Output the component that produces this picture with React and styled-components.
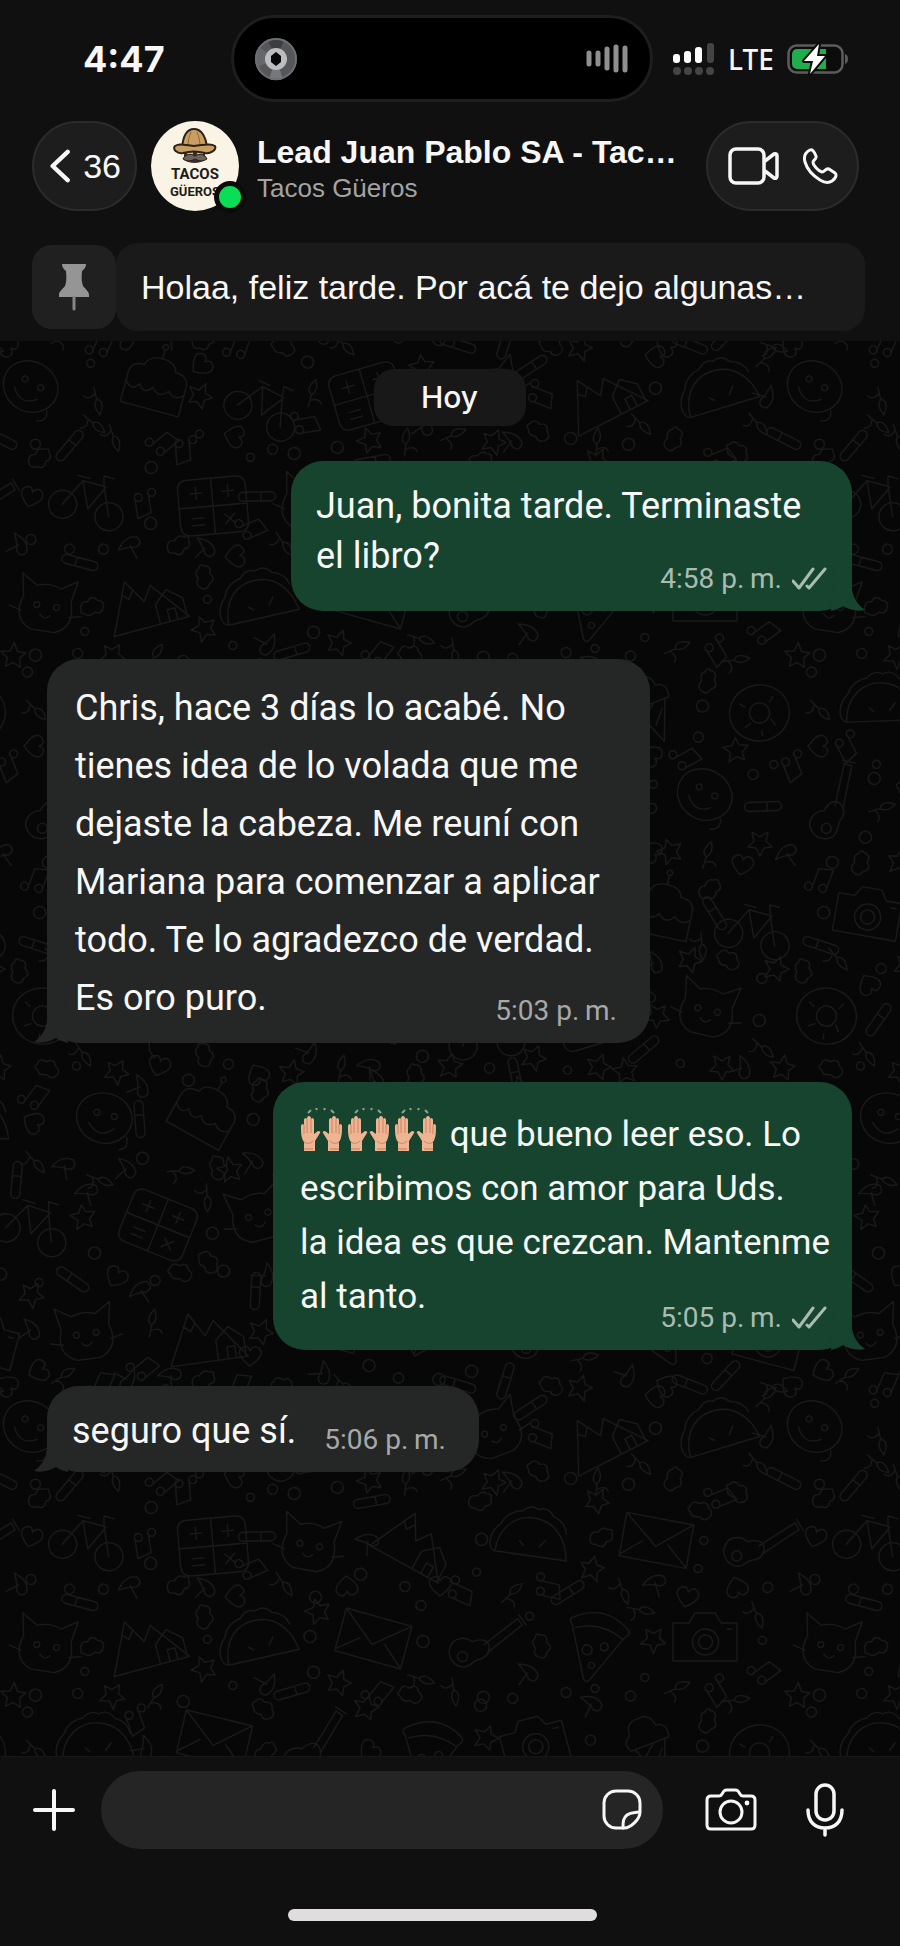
import React from 'react';
import styled, { createGlobalStyle, css } from 'styled-components';

const GlobalStyle = createGlobalStyle`
  *, *::before, *::after { box-sizing: border-box; }
  body {
    margin: 0;
    background: #060706;
    color: #f7f7f7;
    font-family: Roboto, "Liberation Sans", sans-serif;
  }
  button, input { font: inherit; color: inherit; }
`;

/* ---------- page ---------- */

const Screen = styled.div`
  display: flex;
  flex-direction: column;
  min-height: 100vh;
`;

const TopArea = styled.header`
  background: #101010;
  padding: 15px 0 10px;
`;

const StatusBar = styled.div`
  display: grid;
  grid-template-columns: 231fr 422fr 247fr;
  align-items: center;
`;

const Clock = styled.time`
  padding-left: 83px;
  font: 700 36px/44px Inter, sans-serif;
`;

const Island = styled.div`
  display: flex;
  align-items: center;
  justify-content: space-between;
  height: 87px;
  padding: 0 22px 0 20px;
  border: 3px solid #1e1e1e;
  border-radius: 44px;
  background: #000;
`;

const Indicators = styled.div`
  display: flex;
  align-items: center;
  gap: 13px;
  padding-left: 20px;
  font: 500 28px/36px "Noto Sans", sans-serif;
`;

/* ---------- contact bar ---------- */

const ContactBar = styled.div`
  display: flex;
  align-items: center;
  margin-top: 19px;
  padding: 0 41px 0 32px;
`;

const pill = css`
  display: flex;
  align-items: center;
  height: 90px;
  border: 2px solid #2b2b2b;
  border-radius: 45px;
  background: #1d1d1d;
`;

const BackButton = styled.button`
  ${pill}
  gap: 12px;
  width: 105px;
  padding: 0 14px 0 16px;
  font: 400 34px/40px "Liberation Sans", sans-serif;
`;

const AvatarWrap = styled.div`
  position: relative;
  width: 88px;
  height: 90px;
  margin-left: 14px;
`;

const OnlineDot = styled.span`
  position: absolute;
  right: -7px;
  bottom: -2px;
  width: 32px;
  height: 32px;
  border: 5px solid #0b0b0b;
  border-radius: 50%;
  background: #0ade55;
`;

const Contact = styled.div`
  flex: 1;
  min-width: 0;
  padding: 5px 20px 0 18px;
  font-family: "Liberation Sans", sans-serif;
`;

const ContactName = styled.h1`
  margin: 0;
  overflow: hidden;
  font-size: 32px;
  line-height: 38px;
  font-weight: 700;
  white-space: nowrap;
`;

const ContactGroup = styled.p`
  margin: 0;
  color: #a3a3a3;
  font-size: 26px;
  line-height: 34px;
`;

const CallPill = styled.div`
  ${pill}
  justify-content: space-between;
  width: 153px;
  padding: 0 19px 0 20px;
`;

const IconButton = styled.button`
  display: flex;
  align-items: center;
  justify-content: center;
  padding: 0;
  border: 0;
  background: none;
  cursor: pointer;
`;

/* ---------- pinned message ---------- */

const Pinned = styled.button`
  display: flex;
  align-items: center;
  width: calc(100% - 67px);
  height: 88px;
  margin: 32px 35px 0 32px;
  padding: 0;
  border: 0;
  background: none;
  text-align: left;
`;

const PinBox = styled.span`
  display: flex;
  align-items: center;
  justify-content: center;
  width: 84px;
  height: 84px;
  border-radius: 20px;
  background: #202020;
`;

const PinnedText = styled.span`
  flex: 1;
  height: 88px;
  padding-left: 25px;
  border-radius: 22px;
  background: #1a1a1a;
  font: 400 34px/88px "Liberation Sans", sans-serif;
  white-space: nowrap;
  overflow: hidden;
`;

/* ---------- chat ---------- */

const Chat = styled.main`
  position: relative;
  flex: 1;
  display: flex;
  flex-direction: column;
  padding: 28px 48px 60px 47px;
`;

const WallpaperSvg = styled.svg`
  position: absolute;
  inset: 0;
  width: 100%;
  height: 100%;
`;

const DayChip = styled.div`
  position: relative;
  align-self: center;
  width: 152px;
  margin-bottom: 35px;
  border-radius: 20px;
  background: #181818;
  font-family: Inter, sans-serif;
  font-size: 30px;
  line-height: 57px;
  font-weight: 500;
  text-align: center;
`;

const Bubble = styled.article`
  position: relative;
  display: grid;
  align-self: ${p => (p.$sent ? 'flex-end' : 'flex-start')};
  width: ${p => p.$width}px;
  max-width: 100%;
  margin-bottom: ${p => p.$gap || 0}px;
  padding: ${p => p.$top || 20}px 25px 16px ${p => p.$left || 25}px;
  border-radius: 32px;
  background: ${p => (p.$sent ? '#16442f' : '#252726')};
`;

const BubbleText = styled.p`
  grid-area: 1 / 1;
  margin: 0 -12px 0 0;
  padding-bottom: ${p => p.$below || 0}px;
  font-size: ${p => p.$size || 36}px;
  line-height: ${p => p.$line || 50}px;
`;

const Line = styled.span`
  display: block;
`;

const Meta = styled.footer`
  grid-area: 1 / 1;
  place-self: end;
  display: flex;
  align-items: center;
  gap: 10px;
  margin-right: ${p => (p.$sent ? 0 : 8)}px;
  color: ${p => (p.$sent ? '#a9bcb2' : '#a8a8a8')};
  font-size: 28px;
  line-height: 32px;
`;

const TailSvg = styled.svg`
  position: absolute;
  bottom: 0;
  ${p => (p.$sent ? 'right: -13px;' : 'left: -13px; transform: scaleX(-1);')}
  color: ${p => (p.$sent ? '#16442f' : '#252726')};
`;

const Hands = styled.svg`
  vertical-align: -6px;
`;

/* ---------- composer ---------- */

const Composer = styled.form`
  display: flex;
  align-items: center;
  padding: 14px 56px 0 31px;
  border-top: 1px solid #171717;
  background: #101010;
`;

const Field = styled.div`
  flex: 1;
  display: flex;
  align-items: center;
  height: 78px;
  margin: 0 42px 0 24px;
  padding: 0 20px 0 32px;
  border-radius: 39px;
  background: #252525;
`;

const TextInput = styled.input`
  flex: 1;
  min-width: 0;
  border: 0;
  outline: 0;
  background: none;
  font-size: 36px;
`;

const Actions = styled.div`
  display: flex;
  align-items: center;
  gap: 49px;
`;

const HomeArea = styled.div`
  display: flex;
  justify-content: center;
  padding: 60px 15px 25px 0;
  background: #101010;
`;

const HomeIndicator = styled.div`
  width: 35%;
  height: 12px;
  border-radius: 6px;
  background: #dfdddd;
`;

/* ---------- icons ---------- */

const line = { fill: 'none', stroke: 'currentColor', strokeLinecap: 'round', strokeLinejoin: 'round' };

const Lens = () => (
  <svg width="44" height="44" viewBox="0 0 44 44" aria-hidden="true">
    <circle cx="22" cy="22" r="21" fill="#55565a" />
    <path d="M22 22 14 3a21 21 0 0 1 16 0z" fill="#3c3d41" />
    <path d="M22 22 5 10a21 21 0 0 0-2 20z" fill="#66676b" />
    <path d="M22 22 15 42a21 21 0 0 0 14 0z" fill="#77787b" />
    <circle cx="22" cy="22" r="20" fill="none" stroke="#6d6e71" strokeWidth="2" />
    <circle cx="22" cy="22" r="11" fill="#bdbdbf" />
    <path d="m22 15 5 4v6l-5 4-5-4v-6z" fill="#08080a" />
  </svg>
);

const Wave = () => (
  <svg width="42" height="30" viewBox="0 0 42 30" aria-hidden="true">
    <g stroke="#8f8f8f" strokeWidth="5" strokeLinecap="round">
      <path d="M3 9v11M12 9v11" />
      <path d="M21 5v19M30 3v23M39 4v22" />
    </g>
  </svg>
);

const Signal = () => (
  <svg width="42" height="34" viewBox="0 0 42 34" aria-label="Señal" role="img">
    <g fill="#fff">
      <rect x="0" y="12" width="7" height="9" rx="3" />
      <rect x="11" y="9" width="7" height="12" rx="3" />
      <rect x="22" y="5" width="7" height="16" rx="3" />
    </g>
    <g fill="#444">
      <rect x="34" y="1" width="7" height="20" rx="3" />
      <circle cx="4" cy="29" r="4" />
      <circle cx="15" cy="29" r="4" />
      <circle cx="26" cy="29" r="4" />
      <circle cx="37" cy="29" r="4" />
    </g>
  </svg>
);

const Battery = () => (
  <svg width="62" height="34" viewBox="0 0 62 34" aria-label="Batería" role="img">
    <rect x="1.5" y="3.5" width="54" height="27" rx="8" fill="#0c0c0c" stroke="#5c5c5c" strokeWidth="2.5" />
    <path d="M58 12c4 1 4 9 0 10z" fill="#5c5c5c" />
    <path d="M10 7h29v20H10a5 5 0 0 1-5-5V12a5 5 0 0 1 5-5z" fill="#20ad4e" />
    <path d="M32 2 17 19h9l-3 13 15-18h-8z" fill="#fff" stroke="#0c0c0c" strokeWidth="4" strokeLinejoin="round" paintOrder="stroke" />
  </svg>
);

const Chevron = () => (
  <svg width="24" height="40" viewBox="0 0 24 40" aria-hidden="true">
    <path d="M20 4 3 20l17 16" {...line} strokeWidth="5" />
  </svg>
);

const VideoIcon = () => (
  <svg width="51" height="38" viewBox="0 0 51 38" aria-hidden="true">
    <g {...line} strokeWidth="3.5">
      <rect x="2" y="2" width="34" height="34" rx="6" />
      <path d="m37 14 9-7q3-1 3 2v20q0 3-3 2l-9-7" />
    </g>
  </svg>
);

const PhoneIcon = () => (
  <svg width="36" height="37" viewBox="0 0 36 37" aria-hidden="true">
    <path
      d="M8 2c2-1 4 1 6 6 1 3-3 4-3 6 0 3 5 9 9 10 3 0 3-4 7-3l6 4c2 2 1 5-3 8-3 2-7 2-12-1C10 27 5 21 3 14 1 7 4 4 8 2z"
      {...line}
      strokeWidth="3"
    />
  </svg>
);

const PinIcon = () => (
  <svg width="34" height="48" viewBox="0 0 34 48" aria-hidden="true">
    <path d="M5 1h24q0 4-4 7-1 10 1 15c2 3 6 5 6 9v2H2v-2c0-4 4-6 6-9q2-5 1-15Q5 5 5 1z" fill="#959595" />
    <path d="M17 34v12" stroke="#858585" strokeWidth="3" strokeLinecap="round" />
  </svg>
);

const Ticks = () => (
  <svg width="35" height="24" viewBox="0 0 35 24" aria-label="Leído" role="img">
    <path d="m1 14 6 7L21 2M15 19l2 2L33 2" {...line} strokeWidth="3" />
  </svg>
);

const PlusIcon = () => (
  <svg width="46" height="46" viewBox="0 0 46 46" aria-hidden="true">
    <path d="M23 4v38M4 23h38" {...line} strokeWidth="4" />
  </svg>
);

const StickerIcon = () => (
  <svg width="42" height="42" viewBox="0 0 42 42" aria-hidden="true">
    <g {...line} strokeWidth="3">
      <path d="M15 2h12a12 12 0 0 1 12 12v9c0 7-9 16-16 16h-8A12 12 0 0 1 3 27V14A12 12 0 0 1 15 2z" />
      <path d="M38 23c-4 1-8 0-12 3-4 3-4 7-4 13" />
    </g>
  </svg>
);

const CameraIcon = () => (
  <svg width="52" height="44" viewBox="0 0 52 44" aria-hidden="true">
    <g {...line} strokeWidth="3">
      <path d="M6 8h8q2 0 3-2l2-3q1-1 3-1h8q2 0 3 1l2 3q1 2 3 2h8q4 0 4 4v25q0 4-4 4H6q-4 0-4-4V12q0-4 4-4z" />
      <circle cx="26" cy="24" r="11" />
    </g>
    <circle cx="42" cy="15" r="2.4" fill="currentColor" />
  </svg>
);

const MicIcon = () => (
  <svg width="38" height="54" viewBox="0 0 38 54" aria-hidden="true">
    <g {...line} strokeWidth="3.5">
      <rect x="10" y="2" width="18" height="35" rx="9" />
      <path d="M2 27c0 12 7 18 17 18s17-6 17-18M19 45v7" />
    </g>
  </svg>
);

const Tail = ({ sent }) => (
  <TailSvg $sent={sent} width="44" height="44" viewBox="0 0 44 44" aria-hidden="true">
    <path d="M13 0h18v22c1 9 6 16 13 21-9 2-17-1-22-4q-4 3-12 5z" fill="currentColor" />
  </TailSvg>
);

const Avatar = () => (
  <svg width="88" height="90" viewBox="0 0 88 90" role="img" aria-label="Tacos Güeros">
    <ellipse cx="44" cy="45" rx="44" ry="45" fill="#faf4e6" />
    <path d="M31 27c1-12 5-19 12-19s12 7 13 19z" fill="#c99e62" stroke="#2d2117" strokeWidth="2" />
    <path d="M40 11c-2 5-3 9-3 14M46 11c2 5 3 9 3 14" stroke="#8d6938" fill="none" />
    <path d="M31 23c8 4 17 4 25 0l1 5H30z" fill="#4a3524" />
    <path d="M33 28h21v11c-6 4-15 4-21 0z" fill="#3a302a" />
    <path d="M36 31h6v3h-6zM46 31h6v3h-6z" fill="#dfc3a0" />
    <path d="M32 38c2-5 8-6 12-3 4-3 10-2 12 3-5 3-8 2-12 0-4 2-7 3-12 0z" fill="#6d6257" stroke="#241b15" />
    <path d="M24 25c5-3 8-1 19 0 11-1 16-3 21 0 2 4-5 8-10 7-7-2-15-2-22 0-6 1-11-4-8-7z" fill="#c99e62" stroke="#2d2117" strokeWidth="2" />
    <g fill="#211b18" fontFamily="Roboto, sans-serif" fontWeight="700" textAnchor="middle">
      <text x="44" y="58" fontSize="15">TACOS</text>
      <text x="44" y="75" fontSize="13">GÜEROS</text>
    </g>
  </svg>
);

const Hand = ({ transform }) => (
  <g transform={transform}>
    <path
      d="M4 40v-9C1 27 1 21 1 15q0-2 2-2l1 1V9q0-2 2-2l1 1q0-3 2-3t2 3l1-1q2 0 2 2v14l4-3q3 0 2 2l-5 8v10z"
      fill="#efb592"
    />
    <path d="M4 14v9M7 8v14M11 8v14M4 31c3 2 6 2 9-1" fill="none" stroke="#c98466" />
    <path d="M4 38h9" stroke="#d79a78" strokeWidth="2" />
  </g>
);

const RaisedHands = () => (
  <Hands width="141" height="44" viewBox="0 0 141 44" role="img" aria-label="🙌🏻🙌🏻🙌🏻">
    {[0, 47, 94].map(x => (
      <g key={x} transform={`translate(${x} 3)`}>
        <path d="m8 2 3-3M16-3l1 2M25-3l-1 2M34 2l-3-3" stroke="#8fa298" strokeWidth="2" fill="none" />
        <Hand />
        <Hand transform="translate(43 0) scale(-1 1)" />
      </g>
    ))}
  </Hands>
);

/* ---------- wallpaper ---------- */

const BIG = [
  // smiley balloon
  'M-28-6a28 24 0 0 1 56 0a28 26 0 0 1-56 0M-9-12a3 3 0 1 0 1 0M9-12a3 3 0 1 0 1 0M-14 3q14 14 26 0M26 8q6 10-4 14',
  // calculator
  'M-24-28h48q10 0 10 10v36q0 10-10 10h-48q-10 0-10-10v-36q0-10 10-10M0-28v56M-34 0h68M-22-14h12M-16-20v12M10-14h12M16-20v12M11 9l10 10M21 9l-10 10M-22 11h12M-22 18h12',
  // taco
  'M-36 16c2-26 20-38 38-36 20 2 32 18 34 40zM-36 16c-8-2-8-18 4-28 4-10 14-14 20-14q8-8 16-3q10-4 16 6q12 4 14 16M8 8l6-7M-12 4l4 4',
  // pizza slice
  'M-28-18q28-20 56 0q4 4-2 8L2 40q-3 4-6 0L-28-10q-6-5 0-8M-24-8q24-12 48 0M-8 6a5 5 0 1 0 1 0M8 0a4 4 0 1 0 1 0M0 22a3 3 0 1 0 1 0',
  // donut
  'M0-28a30 28 0 1 0 1 0M0-10a10 10 0 1 0 1 0M-18-12l5 4M16-14l-4 5M-16 12l6-3M14 14l-3-6M0 18v5',
  // cake
  'M-30 26v-30q0-12 14-12q2-10 16-10q14 0 16 10q14 0 14 12v30zM-30 4q8 10 14 0q7 10 14 0q8 10 16 0q8 8 16 0M0-26v-8M-3-38q3-6 6 0q-3 6-6 0',
  // cat
  'M-24-8l-4-22l16 10q12-5 24 0l16-10l-4 22q8 24-12 32h-24q-20-8-12-32M-10-4a3 3 0 1 0 1 0M10-4a3 3 0 1 0 1 0M-5 8q5 6 10 0M-36 4l12 3M36 4l-12 3',
  // envelope
  'M-34-20l68-4l3 44l-68 4zM-34-20l36 26l32-30M-12 4l-19 18M14 2l22 17',
  // camera
  'M-32-14h16l6-10h20l6 10h16v38h-64zM0-8a13 13 0 1 0 1 0M0-2a7 7 0 1 0 1 0M22-8h5',
  // flower
  'M0-8a9 9 0 1 0 1 0M-6-8q-6-18 6-20q12 2 6 20q18-10 20 2q0 12-18 10q12 14 0 18q-10 4-12-12q-8 14-16 6q-4-8 6-12q-18 2-16-10q4-12 24-2M0 24q-6 14 4 22',
  // bicycle
  'M-24 4a14 14 0 1 0 1 0M24 4a14 14 0 1 0 1 0M-24 18l14-28h22l12 28M-10-10l12 26l12-26M-16-14h12M12-10l-3-10h10',
  // mountain and cabin
  'M-44 26l24-50l14 24l10-14l30 40zM-26-12l6 6l6-8M4 26v-20l14-12l14 12v20M14 26v-12h8v12',
  // guitar
  'M-8 8c-10-4-20 2-20 12s10 18 20 14c6-3 6-8 10-10s10-6 8-14c-2-8-10-8-18-2M4 8l26-34l6 5L10 14M30-30l10 8M-14 20a5 5 0 1 0 1 0',
  // ice cream
  'M-16 0L0 40L16 0M-20 0h40q4-14-8-16q-2-14-14-12q-14-1-14 13q-10 5-4 15M-8 10l12-10M-2 22l12-14',
];

const SMALL = [
  'M0-6a6 6 0 1 0 1 0',
  'M0-4a4 4 0 1 0 1 0',
  'M0-5a5 5 0 1 0 1 0',
  'M0-12l4 8l8 1l-6 6l2 9l-8-5l-8 5l2-9l-6-6l8-1z',
  'M0 10q-16-12-8-18q6-4 8 3q3-7 9-3q7 7-9 18',
  'M-10 2q-2-8 6-8q4-8 10-2q8 0 6 8q-2 6-8 4q-6 6-10 2q-6 0-4-4',
  'M-6 8a4 4 0 1 0 1 0M8 5a4 4 0 1 0 1 0M-2 12v-20l14-4v20',
  'M-14-4h28a4 4 0 0 1 0 9h-28a4 4 0 0 1 0-9M-4-4v9',
  'M0-14q6 10 0 16q-8-4 0-16M0 2v12M0 8q8-6 12 0',
  'M-12 8q2-16 14-18q8 4 2 10q-8 2-16 8M-2 0l10 10',
];

const TILE_W = 784;
const TILE_H = 1040;

const doodles = (() => {
  let seed = 41;
  const next = () => {
    seed = (seed * 16807) % 2147483647;
    return seed / 2147483647;
  };
  const out = [];
  let k = 0;
  for (let row = 0; row < 10; row += 1) {
    for (let col = 0; col < 7; col += 1) {
      const x = 38 + col * 112 + (row % 2) * 56;
      const y = 52 + row * 104;
      out.push({
        d: BIG[(k * 5 + row * 3) % BIG.length],
        x: x + Math.round(next() * 20 - 10),
        y: y + Math.round(next() * 20 - 10),
        r: Math.round(next() * 60 - 30),
      });
      k += 1;
      [[54, 0], [50, 34], [4, 52], [32, 56], [-32, 50], [50, -32]].forEach(([dx, dy]) => {
        out.push({
          d: SMALL[Math.floor(next() * SMALL.length)],
          x: x + dx + Math.round(next() * 16 - 8),
          y: y + dy + Math.round(next() * 16 - 8),
          r: Math.round(next() * 180),
        });
      });
    }
  }
  return out;
})();

// Neighbouring copies let a doodle that crosses a tile edge continue on the next tile.
const copies = [-1, 0, 1].flatMap(i => [-1, 0, 1].map(j => [i * TILE_W, j * TILE_H]));

const Wallpaper = () => (
  <WallpaperSvg aria-hidden="true">
    <defs>
      <g id="doodle-set" fill="none" stroke="#191918" strokeWidth="1.4" strokeLinecap="round" strokeLinejoin="round">
        {doodles.map((item, i) => (
          <path key={i} d={item.d} transform={`translate(${item.x} ${item.y}) rotate(${item.r})`} />
        ))}
      </g>
      <pattern id="doodles" width={TILE_W} height={TILE_H} patternUnits="userSpaceOnUse">
        {copies.map(([x, y]) => <use key={`${x} ${y}`} href="#doodle-set" x={x} y={y} />)}
      </pattern>
    </defs>
    <rect width="100%" height="100%" fill="url(#doodles)" />
  </WallpaperSvg>
);

/* ---------- messages ---------- */

const messages = [
  {
    sent: true, time: '4:58', width: 561, gap: 48, below: 14,
    lines: ['Juan, bonita tarde. Terminaste', 'el libro?'],
  },
  {
    time: '5:03', width: 603, left: 28, gap: 39, line: 58,
    lines: [
      'Chris, hace 3 días lo acabé. No',
      'tienes idea de lo volada que me',
      'dejaste la cabeza. Me reuní con',
      'Mariana para comenzar a aplicar',
      'todo. Te lo agradezco de verdad.',
      'Es oro puro.',
    ],
  },
  {
    sent: true, time: '5:05', width: 579, left: 27, gap: 36, top: 26, below: 10, line: 54, size: 35, hands: true,
    lines: [
      ' que bueno leer eso. Lo',
      'escribimos con amor para Uds.',
      'la idea es que crezcan. Mantenme',
      'al tanto.',
    ],
  },
  { time: '5:06', width: 432, lines: ['seguro que sí.'] },
];

const Message = ({ sent, time, lines, width, gap, left, top, below, line: lineHeight, size, hands }) => (
  <Bubble $sent={sent} $width={width} $gap={gap} $left={left} $top={top}>
    <Tail sent={sent} />
    <BubbleText $line={lineHeight} $below={below} $size={size}>
      {lines.map((text, i) => (
        <Line key={text}>
          {hands && i === 0 && <RaisedHands />}
          {text}
        </Line>
      ))}
    </BubbleText>
    <Meta $sent={sent}>
      <time>{`${time} p.\u2009m.`}</time>
      {sent && <Ticks />}
    </Meta>
  </Bubble>
);

export default function App() {
  return (
    <Screen>
      <GlobalStyle />
      <TopArea>
        <StatusBar>
          <Clock>4:47</Clock>
          <Island>
            <Lens />
            <Wave />
          </Island>
          <Indicators>
            <Signal />
            <span>LTE</span>
            <Battery />
          </Indicators>
        </StatusBar>
        <ContactBar>
          <BackButton type="button" aria-label="Volver, 36 chats">
            <Chevron />
            36
          </BackButton>
          <AvatarWrap>
            <Avatar />
            <OnlineDot />
          </AvatarWrap>
          <Contact>
            <ContactName>Lead Juan Pablo SA - Tac…</ContactName>
            <ContactGroup>Tacos Güeros</ContactGroup>
          </Contact>
          <CallPill>
            <IconButton type="button" aria-label="Videollamada"><VideoIcon /></IconButton>
            <IconButton type="button" aria-label="Llamar"><PhoneIcon /></IconButton>
          </CallPill>
        </ContactBar>
        <Pinned type="button">
          <PinBox><PinIcon /></PinBox>
          <PinnedText>Holaa, feliz tarde. Por acá te dejo algunas…</PinnedText>
        </Pinned>
      </TopArea>
      <Chat>
        <Wallpaper />
        <DayChip>Hoy</DayChip>
        {messages.map(m => <Message key={m.time} {...m} />)}
      </Chat>
      <Composer onSubmit={e => e.preventDefault()}>
        <IconButton type="button" aria-label="Adjuntar"><PlusIcon /></IconButton>
        <Field>
          <TextInput type="text" aria-label="Mensaje" />
          <IconButton type="button" aria-label="Stickers"><StickerIcon /></IconButton>
        </Field>
        <Actions>
          <IconButton type="button" aria-label="Cámara"><CameraIcon /></IconButton>
          <IconButton type="button" aria-label="Grabar audio"><MicIcon /></IconButton>
        </Actions>
      </Composer>
      <HomeArea><HomeIndicator /></HomeArea>
    </Screen>
  );
}
